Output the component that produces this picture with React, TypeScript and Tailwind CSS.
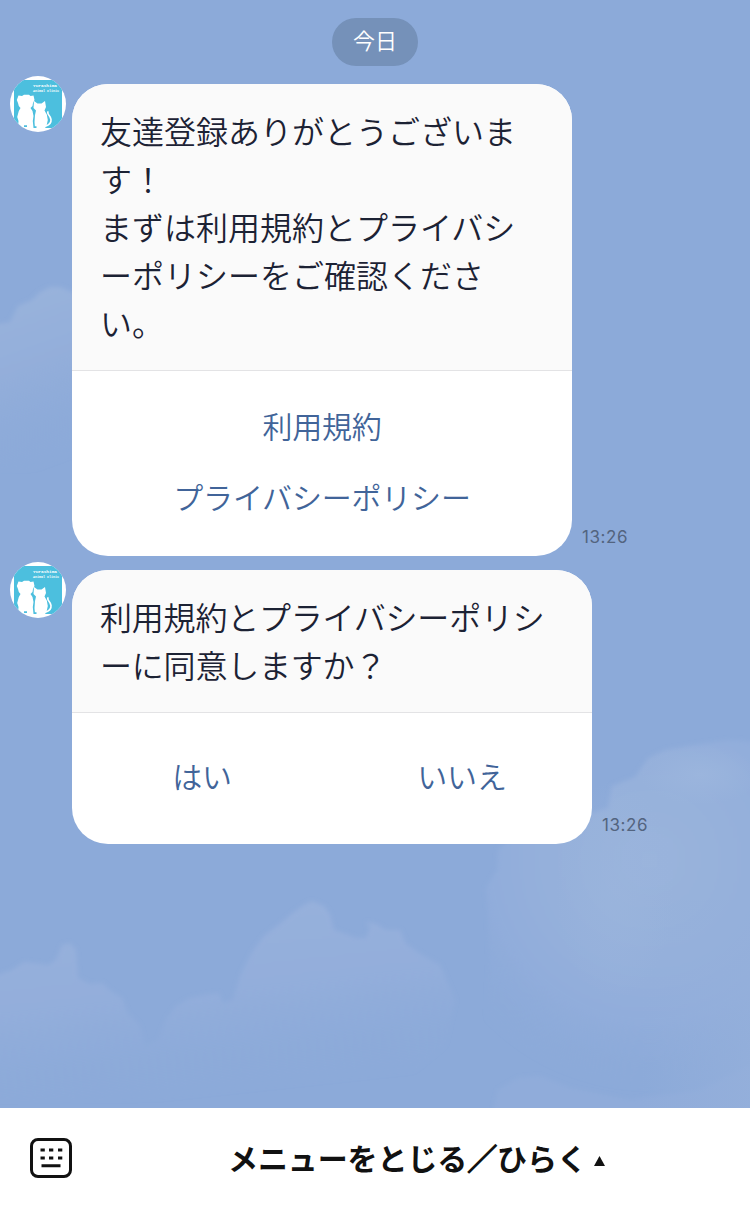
import type { ReactNode } from "react"

const terms = ["利用規約", "プライバシーポリシー"]

function Clouds() {
  return (
    <svg
      className="absolute inset-0 h-full w-full"
      viewBox="0 0 750 1108"
      preserveAspectRatio="none"
    >
      <defs>
        <linearGradient id="fadeLeft" x1="0.3" y1="0" x2="0.5" y2="1">
          <stop offset="0%" stopColor="#99b3dc" />
          <stop offset="45%" stopColor="#93aeda" />
          <stop offset="100%" stopColor="#8caad9" stopOpacity="0" />
        </linearGradient>

        <linearGradient id="fadeDown" x1="0.35" y1="0" x2="0.6" y2="1">
          <stop offset="0%" stopColor="#97b1dc" />
          <stop offset="45%" stopColor="#93aedb" />
          <stop offset="95%" stopColor="#8caad9" stopOpacity="0" />
        </linearGradient>

        <radialGradient id="puff" gradientUnits="userSpaceOnUse" cx="650" cy="860" r="230">
          <stop offset="0%" stopColor="#9ab4dc" />
          <stop offset="45%" stopColor="#95b0db" />
          <stop offset="70%" stopColor="#91addb" />
          <stop offset="100%" stopColor="#8caad9" stopOpacity="0" />
        </radialGradient>

        <linearGradient id="edge" x1="0" y1="0" x2="1" y2="0">
          <stop offset="0%" stopColor="#95b0db" stopOpacity="0" />
          <stop offset="100%" stopColor="#95b0db" />
        </linearGradient>

        <radialGradient id="glow">
          <stop offset="0%" stopColor="#9bb5dd" />
          <stop offset="100%" stopColor="#9bb5dd" stopOpacity="0" />
        </radialGradient>

        <filter id="soft" x="-10%" y="-10%" width="120%" height="120%">
          <feGaussianBlur stdDeviation="2" />
        </filter>
      </defs>

      <g filter="url(#soft)">
        <path
          d="M-10 325 L10 322 L18 306 L32 300 L40 292 L50 287 L60 287 L72 292 L90 300 V470 H-10Z"
          fill="url(#fadeLeft)"
        />

        <path
          d="M-10 985 L0 974 L12 970 L24 962 L34 963 L48 965 L56 960 L62 945 L70 943 L76 950 L78 978 L90 984 L102 983 L112 992 L122 998 L127 1012 L140 1026 L145 1046 L158 1040 L166 1020 L176 1006 L190 998 L210 994 L219 993 L223 1003 L233 1000 L240 976 L252 952 L264 936 L282 922 L294 912 L304 905 L312 901 L324 906 L330 914 L334 930 L346 934 L356 938 L366 938 L370 928 L366 922 L376 924 L386 930 L400 930 L406 944 L422 955 L440 965 L455 1000 L445 1045 L400 1085 L300 1100 L150 1100 L-10 1100Z"
          fill="url(#fadeDown)"
        />

        <path
          d="M498 850 L515 835 L560 820 L595 812 L608 808 L612 786 L635 777 L648 758 L665 750 L700 744 L730 740 L760 742 V1120 L480 1120 L490 960 L488 910 L486 888 L497 870Z"
          fill="url(#puff)"
        />

        <path
          d="M490 1125 L498 1090 L518 1078 L540 1076 L570 1088 L630 1100 L700 1090 L760 1060 V1125Z"
          fill="#95b0db"
          opacity="0.4"
        />
      </g>

      <rect x="640" y="900" width="110" height="208" fill="url(#edge)" opacity="0.7" />
      <ellipse cx="700" cy="775" rx="60" ry="30" fill="url(#glow)" />
      <ellipse cx="615" cy="890" rx="60" ry="110" fill="url(#glow)" opacity="0.6" />
    </svg>
  )
}

function Avatar() {
  return (
    <svg className="-mt-2 mr-1.5 size-14 shrink-0" viewBox="0 0 56 56">
      <clipPath id="face">
        <circle cx="28" cy="28" r="28" />
      </clipPath>

      <g clipPath="url(#face)">
        <rect width="56" height="56" fill="#fff" />
        <rect x="4" y="4" width="48" height="48" fill="#4cbfde" />
      </g>

      <g fill="#fff" fontFamily="'Liberation Mono', monospace" fontSize="4.4" fontWeight="700">
        <text x="23" y="11.3" textLength="24" lengthAdjust="spacingAndGlyphs">Yurashima</text>
        <text x="23" y="16.3" textLength="26" lengthAdjust="spacingAndGlyphs">Animal Clinic</text>
      </g>

      <g clipPath="url(#face)">
        {/* dog */}
        <path
          fill="#fff"
          d="M8.5 19.5 L12 20 L14 18.8 L19 18.8 L20.5 20 L23.5 19.6 L24.5 24 L23 27 L22.5 30 L20.5 32 L22.5 35 L23.5 40 L22.8 45 L23.5 52 H8 L8.5 45 L7.2 41 L8.8 35 L10.5 32 L8.8 30 L8 27 L6.8 24Z"
        />

        {/* cat */}
        <path
          fill="#fff"
          d="M24 25 L27.5 27.5 H31.5 L35 25 L36 31 L34.5 34.5 L36.8 38.5 L37.8 44 L36.5 50 L35 52 H25 L24.5 46 L25 39 L26 34.5 L23.5 32Z"
        />
        <path
          d="M36 50 Q41.5 48 41 43.5 Q40.5 41 38.5 38.5 Q37 36.5 38.5 35.5"
          fill="none"
          stroke="#fff"
          strokeWidth="1.6"
        />
        <path d="M14 50.2h3M24 51.2h2.5" stroke="#4cbfde" strokeWidth="1.8" />
      </g>
    </svg>
  )
}

function Message({ text, width, children }: { text: string; width: string; children: ReactNode }) {
  return (
    <div className="flex items-start pl-2.5">
      <Avatar />

      <div className={`${width} shrink-0 overflow-hidden rounded-[36px] bg-white`}>
        <p className="border-b border-[#e3e3e5] bg-[#fafafa] px-7 pt-[22px] pb-6 text-[32px] leading-[48px] font-[350] whitespace-pre text-[#1c2234]">
          {text}
        </p>
        {children}
      </div>

      <time className="mb-2 ml-2.5 self-end font-['Inter'] text-[17px] leading-[22px] tracking-[0.6px] text-[#53647f]">
        13:26
      </time>
    </div>
  )
}

function KeyboardIcon() {
  return (
    <svg className="mb-0.5 h-10 w-[42px] shrink-0" viewBox="0 0 42 40" fill="none" stroke="#111" strokeWidth="3">
      <rect x="1.5" y="1.5" width="39" height="37" rx="6.5" />
      <path d="M10.5 12h4.3M19 12h4.3M28 12h4.3M10.5 20h4.3M19 20h4.3M28 20h4.3M11.5 27.8h19" />
    </svg>
  )
}

export default function App() {
  return (
    <main className="flex h-[1209px] w-[750px] flex-col overflow-hidden bg-white font-['Noto_Sans_CJK_JP',sans-serif]">
      <section className="relative h-[1108px] shrink-0 bg-[#8caad9]">
        <Clouds />

        <div className="relative flex flex-col pt-[18px]">
          <div className="h-12 w-[86px] self-center rounded-full bg-[#7591b9] text-center text-[22px] leading-[43px] font-[350] text-white">
            今日
          </div>

          <div className="mt-[18px] flex flex-col gap-3.5">
            <Message
              width="w-[500px]"
              text={"友達登録ありがとうございま\nす！\nまずは利用規約とプライバシ\nーポリシーをご確認くださ\nい。"}
            >
              <div className="flex h-[185px] flex-col items-center pt-[19px] text-[30px] leading-[71px] font-[350] tracking-[-0.2px] text-[#416499]">
                {terms.map((item) => (
                  <button key={item}>{item}</button>
                ))}
              </div>
            </Message>

            <Message
              width="w-[520px] tracking-[-0.2px]"
              text={"利用規約とプライバシーポリシ\nーに同意しますか？"}
            >
              <div className="grid h-[131px] grid-cols-2 pb-[7px] text-[30px] font-[350] text-[#416499]">
                <button>はい</button>
                <button>いいえ</button>
              </div>
            </Message>
          </div>
        </div>
      </section>

      <footer className="flex h-[101px] shrink-0 items-center pl-[30px]">
        <KeyboardIcon />
        <div className="ml-[156px] flex items-center pb-1 text-[30px] leading-[48px] font-bold text-[#111]">
          <span className="tracking-[-0.1px]">
            メニューをとじる<span className="[-webkit-text-stroke:1.2px_#111]">／</span>ひらく
          </span>
          <svg className="mt-2 ml-[7px] h-[10px] w-[11px]" viewBox="0 0 11 10">
            <path d="M5.5 0L11 10H0Z" fill="#111" />
          </svg>
        </div>
      </footer>
    </main>
  )
}
